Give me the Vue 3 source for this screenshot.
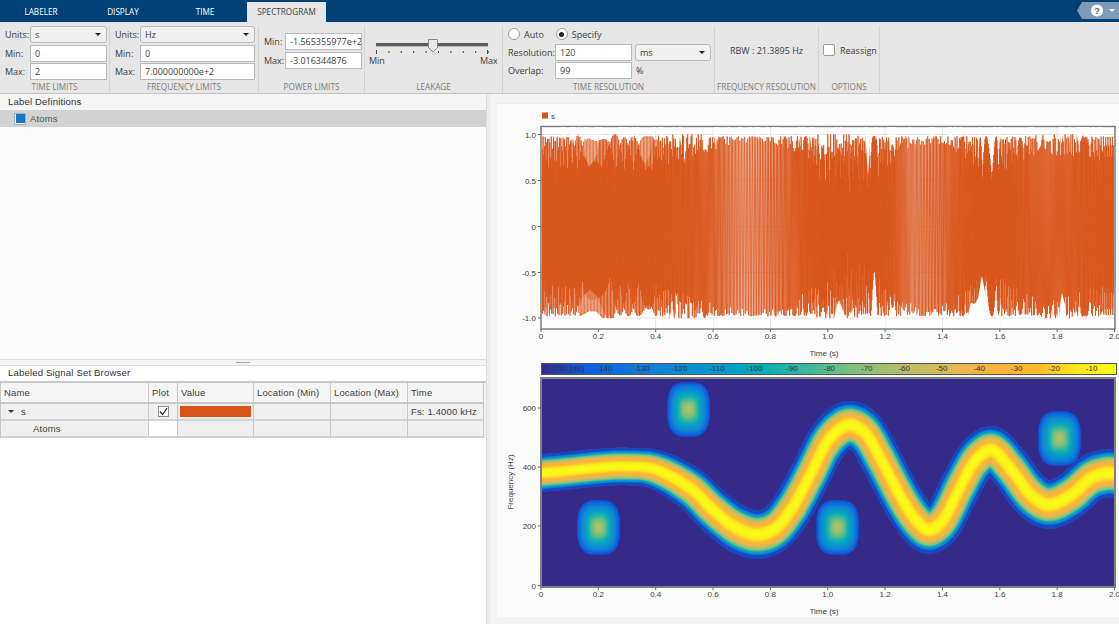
<script setup>
import { ref, onMounted } from 'vue'

const waveCanvas = ref(null)
const heatCanvas = ref(null)

const xTicks = [0, 0.2, 0.4, 0.6, 0.8, 1.0, 1.2, 1.4, 1.6, 1.8, 2.0].map((v, i) => ({
  x: 541 + 57.35 * i,
  label: v === 0 ? '0' : v.toFixed(1),
}))
const waveY = [
  { y: 134.5, label: '1.0' }, { y: 180.5, label: '0.5' }, { y: 226.5, label: '0' },
  { y: 272.5, label: '-0.5' }, { y: 318, label: '-1.0' },
]
const heatY = [
  { y: 408, label: '600' }, { y: 467, label: '400' }, { y: 526, label: '200' }, { y: 585.5, label: '0' },
]
const barLabels = ['-150 (dB)', '-140', '-130', '-120', '-110', '-100', '-90', '-80', '-70', '-60', '-50', '-40', '-30', '-20', '-10']
  .map((label, i) => ({ label, x: i === 0 ? 567 : 566 + 37.47 * i }))
const sliderTicks = Array.from({ length: 10 }, (_, i) => 375 + i * 12.4)

const columns = ['Name', 'Plot', 'Value', 'Location (Min)', 'Location (Max)', 'Time']

const ridge = [
  [541, 472.5], [560, 471], [600, 467], [627, 466], [655, 469], [690, 488], [713, 510], [735, 527],
  [756, 534], [775, 528], [790, 510], [800, 493], [812, 470], [825, 444], [840, 428], [852, 425], [866, 434], [880, 458], [900, 496], [915, 519],
  [928, 529], [943, 519], [960, 486], [975, 460], [992, 450], [1010, 468], [1030, 494], [1048, 504],
  [1070, 495], [1090, 478], [1105, 473], [1116, 473],
]

function ridgeY(x) {
  let i = 0
  while (i < ridge.length - 2 && ridge[i + 1][0] < x) i++
  const p1 = ridge[i], p2 = ridge[i + 1]
  const p0 = ridge[Math.max(0, i - 1)], p3 = ridge[Math.min(ridge.length - 1, i + 2)]
  const h = p2[0] - p1[0]
  const t = Math.max(0, Math.min(1, (x - p1[0]) / h))
  const m1 = ((p2[1] - p0[1]) / (p2[0] - p0[0] || 1)) * h
  const m2 = ((p3[1] - p1[1]) / (p3[0] - p1[0] || 1)) * h
  const t2 = t * t, t3 = t2 * t
  return (2 * t3 - 3 * t2 + 1) * p1[1] + (t3 - 2 * t2 + t) * m1 + (-2 * t3 + 3 * t2) * p2[1] + (t3 - t2) * m2
}

const stops = [
  [0, 249, 251, 21], [10, 250, 232, 32], [20, 253, 190, 44], [30, 253, 176, 58], [40, 232, 184, 78],
  [50, 200, 188, 96], [60, 165, 191, 110], [70, 120, 192, 127], [80, 63, 184, 155], [90, 16, 174, 177],
  [100, 3, 160, 198], [110, 10, 146, 207], [120, 19, 130, 212], [130, 12, 111, 219], [140, 10, 91, 224],
  [150, 53, 42, 135],
]
function colorAt(db) {
  const v = Math.max(0, Math.min(150, -db))
  const i = Math.min(stops.length - 2, Math.floor(v / 10))
  const f = (v - stops[i][0]) / 10
  return [1, 2, 3].map((k) => stops[i][k] + (stops[i + 1][k] - stops[i][k]) * f)
}
const barGradient =
  'linear-gradient(to right,' +
  stops.slice().reverse().map((s) => `rgb(${s[1]},${s[2]},${s[3]}) ${((150 - s[0]) / 150) * 100}%`).join(',') +
  ')'

function drawHeat(canvas) {
  const ctx = canvas.getContext('2d')
  const W = canvas.width, H = canvas.height
  const ox = 542, oy = 379
  const best = new Float64Array(W * H).fill(-1000)
  const a = 20
  for (let sx = 510; sx < 1150; sx += 1) {
    const cy = ridgeY(Math.max(541, Math.min(1116, sx)))
    const b = sx < 640 ? 19 : sx > 740 ? 24.5 : 19 + ((sx - 640) / 100) * 5.5
    for (let x = Math.max(0, Math.floor(sx - a - ox)); x < W && x + ox <= sx + a; x++) {
      const dx = (x + ox - sx) / a
      for (let y = Math.max(0, Math.floor(cy - b - oy)); y < H && y + oy <= cy + b; y++) {
        const dy = (y + oy - cy) / b
        const r2 = dx * dx + dy * dy
        if (r2 > 1) continue
        const v = 150 * Math.pow(r2, 0.85)
        const db = -Math.min(144, v + Math.max(0, v - 70) * 0.6)
        const k = y * W + x
        if (db > best[k]) best[k] = db
      }
    }
  }
  const blobs = [[598, 527], [688, 409], [837, 527], [1059, 438]]
  for (const [bx, by] of blobs) {
    for (let y = 0; y < H; y++) {
      for (let x = 0; x < W; x++) {
        const u = Math.abs(x + ox - bx) / 21.5, v = Math.abs(y + oy - by) / 27.5
        if (u > 1 || v > 1) continue
        const r = Math.pow(u * u * u + v * v * v, 1 / 3)
        if (r > 1) continue
        const db = -Math.min(144, 54 + 92 * Math.pow(r, 1.3))
        const k = y * W + x
        if (db > best[k]) best[k] = db
      }
    }
  }
  const img = ctx.createImageData(W, H)
  for (let k = 0; k < W * H; k++) {
    const c = best[k] < -150 ? [53, 42, 135] : colorAt(best[k])
    img.data[k * 4] = c[0]
    img.data[k * 4 + 1] = c[1]
    img.data[k * 4 + 2] = c[2]
    img.data[k * 4 + 3] = 255
  }
  ctx.putImageData(img, 0, 0)
}

function drawWave(canvas) {
  const ctx = canvas.getContext('2d')
  ctx.translate(-542, -127)
  const atoms = [[0.2, 200], [0.5, 600], [1.03, 200], [1.8, 500]]
  let phase = 0
  let px = 541, py = 226
  ctx.lineWidth = 1
  ctx.strokeStyle = 'rgba(217,83,25,0.85)'
  for (let n = 0; n < 2800; n++) {
    const t = n / 1400
    const x = 541 + t * 286.75
    const f = (586 - ridgeY(x)) / 0.2966
    phase += (2 * Math.PI * f) / 1400
    let s = 0.86 * Math.cos(phase)
    for (const [at, af] of atoms) {
      const g = Math.exp(-Math.pow((t - at) / 0.05, 2))
      s += 0.14 * g * Math.cos(2 * Math.PI * af * t)
    }
    s *= 1.14
    s = Math.max(-1, Math.min(1, s))
    const y = 226.3 - s * 91.8
    ctx.beginPath()
    ctx.moveTo(px, py)
    ctx.lineTo(x, y)
    ctx.stroke()
    px = x
    py = y
  }
  const poly = (pts, color) => {
    ctx.fillStyle = color
    ctx.beginPath()
    pts.forEach((p, i) => (i ? ctx.lineTo(p[0], p[1]) : ctx.moveTo(p[0], p[1])))
    ctx.closePath()
    ctx.fill()
  }
  // irregular spikes along the envelope
  let seed = 12345
  const rnd = () => {
    seed = (seed * 16807) % 2147483647
    return seed / 2147483647
  }
  for (let i = 0; i < 150; i++) {
    const x = 542 + rnd() * 572
    const w = 0.8 + rnd() * 1.6
    const d = 3 + rnd() * rnd() * 10
    if (rnd() < 0.5) poly([[x - w, 127], [x + w, 127], [x + w * 0.6, 135], [x, 135 + d]], '#fff')
    else poly([[x - w, 328], [x + w, 328], [x + w * 0.6, 318], [x, 318 - d]], '#fff')
  }
  poly([[865, 128], [871, 128], [869, 160], [868, 176], [867, 160]], '#fff')
  poly([[966, 327], [969, 310], [971, 303], [975, 304], [978, 298], [982, 276], [985, 292], [988, 312], [990, 327]], '#fff')
  poly([[1058, 327], [1060, 305], [1062, 293], [1065, 305], [1067, 327]], '#fff')
  poly([[832, 327], [837, 305], [839, 300], [843, 311], [850, 327]], '#fff')
  poly([[570, 327], [580, 316], [590, 311], [600, 316], [608, 327]], '#fff')
  poly([[640, 327], [645, 318], [652, 327]], '#fff')
  poly([[580, 135], [590, 133], [600, 135], [597, 155], [590, 166], [583, 155]], 'rgba(255,255,255,0.22)')
  poly([[638, 135], [645, 133], [653, 135], [650, 155], [645, 164], [640, 155]], 'rgba(255,255,255,0.22)')
  poly([[575, 316], [590, 311], [605, 316], [597, 296], [590, 290], [583, 296]], 'rgba(255,255,255,0.22)')
  const band = (x0, x1, alpha) => {
    const g = ctx.createLinearGradient(x0, 0, x1, 0)
    g.addColorStop(0, 'rgba(255,255,255,0)')
    g.addColorStop(0.5, `rgba(255,255,255,${alpha})`)
    g.addColorStop(1, 'rgba(255,255,255,0)')
    ctx.fillStyle = g
    ctx.fillRect(x0, 134, x1 - x0, 184)
  }
  band(715, 770, 0.13)
  band(895, 930, 0.14)
}

onMounted(() => {
  drawWave(waveCanvas.value)
  drawHeat(heatCanvas.value)
})
</script>

<template>
  <div class="app">
    <header class="tabs">
      <div class="tab">LABELER</div>
      <div class="tab">DISPLAY</div>
      <div class="tab">TIME</div>
      <div class="tab active">SPECTROGRAM</div>
      <div class="help">
        <svg width="42" height="17" viewBox="0 0 42 17">
          <path d="M5 0H42V17H5L0 8.5Z" fill="#7f9ab5" />
          <circle cx="20" cy="8.5" r="6" fill="#fff" />
          <text x="20" y="12" text-anchor="middle" class="help-q">?</text>
          <path d="M32 7h6l-3 3z" fill="#fff" />
        </svg>
      </div>
    </header>

    <section class="strip">
      <div class="group g-time">
        <div class="group-body">
          <div class="field"><label>Units:</label><div class="drop"><span>s</span><i></i></div></div>
          <div class="field"><label>Min:</label><div class="input">0</div></div>
          <div class="field"><label>Max:</label><div class="input">2</div></div>
        </div>
        <div class="group-title">TIME LIMITS</div>
      </div>
      <div class="group g-freq">
        <div class="group-body">
          <div class="field"><label>Units:</label><div class="drop"><span>Hz</span><i></i></div></div>
          <div class="field"><label>Min:</label><div class="input">0</div></div>
          <div class="field"><label>Max:</label><div class="input">7.000000000e+2</div></div>
        </div>
        <div class="group-title">FREQUENCY LIMITS</div>
      </div>
      <div class="group g-power">
        <div class="group-body center">
          <div class="field"><label>Min:</label><div class="input clip">-1.565355977e+2</div></div>
          <div class="field"><label>Max:</label><div class="input">-3.016344876</div></div>
        </div>
        <div class="group-title">POWER LIMITS</div>
      </div>
      <div class="group g-leak">
        <div class="group-body">
          <div class="slider">
            <svg width="132" height="42" viewBox="364 28 132 42">
              <rect x="375" y="43" width="112" height="3.5" fill="#5c5c5c" />
              <rect x="375" y="46" width="112" height="1" fill="#bdbdbd" />
              <rect v-for="t in sliderTicks" :key="t" :x="t" y="51" width="1" height="2" fill="#444" />
              <rect x="486" y="50" width="1" height="4" fill="#444" />
              <rect x="375" y="50" width="1" height="4" fill="#444" />
              <path d="M427.500 39.500h9v8l-4.500 4.500-4.500-4.500z" fill="#e8e8e8" stroke="#8a8a8a" />
              <text x="368" y="64" class="tiny">Min</text>
              <text x="479" y="64" class="tiny">Max</text>
            </svg>
          </div>
        </div>
        <div class="group-title">LEAKAGE</div>
      </div>
      <div class="group g-res">
        <div class="group-body">
          <div class="radios">
            <span class="radio"></span><span class="radio-text r1">Auto</span>
            <span class="radio on"></span><span class="radio-text">Specify</span>
          </div>
          <div class="field"><label>Resolution:</label><div class="input">120</div><div class="drop"><span>ms</span><i></i></div></div>
          <div class="field"><label>Overlap:</label><div class="input">99</div><span class="pct">%</span></div>
        </div>
        <div class="group-title">TIME RESOLUTION</div>
      </div>
      <div class="group g-rbw">
        <div class="group-body middle">RBW :  21.3895 Hz</div>
        <div class="group-title">FREQUENCY RESOLUTION</div>
      </div>
      <div class="group g-opt">
        <div class="group-body middle start"><span class="check"></span><span>Reassign</span></div>
        <div class="group-title">OPTIONS</div>
      </div>
    </section>

    <main class="work">
      <aside class="side">
        <div class="defs">
          <div class="panel-title">Label Definitions</div>
          <div class="def-row"><span class="swatch"><b></b></span><span>Atoms</span></div>
        </div>
        <div class="split"><span></span></div>
        <div class="browser">
          <div class="panel-title second">Labeled Signal Set Browser</div>
          <div class="table">
            <div class="row head"><div v-for="c in columns" :key="c" class="cell">{{ c }}</div></div>
            <div class="row body">
              <div class="cell"><span class="tree"></span>s</div>
              <div class="cell plotcell">
                <svg width="11" height="11" viewBox="0 0 11 11">
                  <rect x=".5" y=".5" width="10" height="10" fill="#fff" stroke="#8e8e8e" />
                  <path d="M2 5.500l2.500 3L9 2" fill="none" stroke="#222" stroke-width="1.300" />
                </svg>
              </div>
              <div class="cell valcell"><span class="bar"></span></div>
              <div class="cell"></div>
              <div class="cell"></div>
              <div class="cell">Fs: 1.4000 kHz</div>
            </div>
            <div class="row body">
              <div class="cell indent">Atoms</div>
              <div class="cell blank"></div>
              <div class="cell"></div>
              <div class="cell"></div>
              <div class="cell"></div>
              <div class="cell"></div>
            </div>
          </div>
        </div>
      </aside>
      <div class="vsplit"></div>
      <div class="right">
        <div class="plots">
          <svg class="axes" width="622" height="514" viewBox="497 103 622 514">
            <rect x="541" y="126" width="574" height="203" fill="#fff" />
            <rect x="542" y="112.500" width="6" height="6" fill="#d95319" />
            <text x="551" y="119" class="tick">s</text>
            <line v-for="t in xTicks" :key="'g' + t.x" :x1="t.x" :x2="t.x" y1="127" y2="328" stroke="#e4e4e4" />
            <line v-for="t in waveY" :key="'h' + t.y" x1="541" x2="1115" :y1="t.y" :y2="t.y" stroke="#e2e2e2" />
            <rect x="541" y="126.500" width="574" height="202.500" fill="none" stroke="#777" stroke-width="1.400" />
            <g v-for="t in xTicks" :key="'x' + t.x">
              <line :x1="t.x" :x2="t.x" y1="329" y2="332" stroke="#666" />
              <text :x="t.x" y="339" text-anchor="middle" class="tick">{{ t.label }}</text>
            </g>
            <g v-for="t in waveY" :key="'y' + t.y">
              <line x1="538" x2="541" :y1="t.y" :y2="t.y" stroke="#666" />
              <text x="536" :y="t.y + 3" text-anchor="end" class="tick">{{ t.label }}</text>
            </g>
            <text x="824" y="356" text-anchor="middle" class="tick">Time (s)</text>

            <rect x="541" y="378" width="574" height="209" fill="none" stroke="#808080" stroke-width="2" />
            <g v-for="t in xTicks" :key="'bx' + t.x">
              <line :x1="t.x" :x2="t.x" y1="587" y2="590" stroke="#666" />
              <text :x="t.x" y="597" text-anchor="middle" class="tick">{{ t.label }}</text>
            </g>
            <g v-for="t in heatY" :key="'by' + t.y">
              <line x1="538" x2="541" :y1="t.y" :y2="t.y" stroke="#666" />
              <text x="536" :y="t.y + 3" text-anchor="end" class="tick">{{ t.label }}</text>
            </g>
            <text x="824" y="614" text-anchor="middle" class="tick">Time (s)</text>
            <text transform="translate(513 482) rotate(-90)" text-anchor="middle" class="tick">Frequency (Hz)</text>
          </svg>
          <canvas ref="waveCanvas" class="wave" width="572" height="201"></canvas>
          <canvas ref="heatCanvas" class="heat" width="572" height="207"></canvas>
          <div class="colorbar" :style="{ background: barGradient }">
            <span v-for="b in barLabels" :key="b.label" :style="{ left: b.x - 541 + 'px' }">{{ b.label }}</span>
          </div>
        </div>
      </div>
    </main>
  </div>
</template>

<style scoped>
.app {
  width: 1119px;
  height: 624px;
  overflow: hidden;
  display: flex;
  flex-direction: column;
  background: #f5f5f5;
  font-family: "Liberation Sans", Arial, sans-serif;
  color: #404040;
  filter: blur(0.35px);
}
.tabs {
  height: 22px;
  flex: none;
  background: #004175;
  display: flex;
  align-items: flex-end;
  font-family: "Open Sans", sans-serif;
  font-size: 8.2px;
  color: #fff;
  position: relative;
}
.tab {
  width: 82px;
  height: 20px;
  line-height: 20px;
  text-align: center;
}
.tab.active {
  width: 79px;
  margin-left: 1px;
  background: #e6e6e6;
  color: #404040;
}
.help {
  position: absolute;
  right: 0;
  top: 2px;
  height: 17px;
}
.help-q {
  font: bold 9px "Liberation Sans", sans-serif;
  fill: #44607f;
}
.strip {
  height: 71px;
  flex: none;
  background: #e6e6e6;
  border-bottom: 1px solid #c4c4c4;
  box-sizing: content-box;
  display: flex;
  font-family: "Open Sans", sans-serif;
  font-size: 9px;
}
.group {
  display: flex;
  flex-direction: column;
  border-right: 1px solid #d2d2d2;
  box-sizing: border-box;
  margin-top: 4px;
  height: 67px;
}
.g-time { width: 110px; }
.g-freq { width: 149px; }
.g-power { width: 106px; }
.g-leak { width: 138px; }
.g-res { width: 212px; }
.g-rbw { width: 104px; }
.g-opt { width: 61px; }
.group-body {
  flex: 1;
  padding: 0 2px 0 5px;
  display: flex;
  flex-direction: column;
  gap: 1.500px;
  min-height: 0;
}
.group-body.center { justify-content: center; padding-bottom: 4px; }
.group-body.middle {
  flex-direction: row;
  justify-content: center;
  align-items: center;
  padding: 0 0 6px;
  white-space: pre;
}
.group-body.start { justify-content: flex-start; padding-left: 4px; gap: 5px; }
.group-title {
  height: 13px;
  line-height: 13px;
  text-align: center;
  color: #808080;
  font-size: 8.2px;
  white-space: nowrap;
}
.field {
  display: flex;
  align-items: center;
  height: 17px;
}
.field label { flex: none; white-space: nowrap; }
.g-time label, .g-freq label { width: 25px; }
.g-power label { width: 21px; }
.g-res label { width: 47px; }
.input, .drop {
  box-sizing: border-box;
  height: 17px;
  line-height: 15px;
  border: 1px solid #b9b9b9;
  background: #fff;
  padding-left: 4px;
  white-space: nowrap;
  overflow: hidden;
  flex: none;
}
.g-time .input, .g-time .drop { width: 77px; }
.g-freq .input, .g-freq .drop { width: 115px; }
.g-power .input { width: 77px; }
.g-res .input { width: 77px; }
.g-res .drop { width: 76px; margin-left: 3px; }
.drop {
  background: #f0f0f0;
  border-radius: 3px;
  display: flex;
  justify-content: space-between;
  align-items: center;
  padding-right: 5px;
}
.drop i {
  width: 0;
  height: 0;
  border-left: 3.500px solid transparent;
  border-right: 3.500px solid transparent;
  border-top: 3.500px solid #222;
}
.pct { margin-left: 4px; }
.slider { margin: 0 0 0 -5px; height: 42px; }
.slider svg { display: block; margin-top: 2px; }
.tiny { font: 9px "Open Sans", sans-serif; fill: #404040; }
.radios {
  display: flex;
  align-items: center;
  height: 14px;
  margin: 1px 0 1px;
}
.radio {
  box-sizing: border-box;
  width: 12px;
  height: 12px;
  border-radius: 50%;
  background: #fff;
  border: 1px solid #9a9a9a;
  margin-right: 4px;
  display: flex;
  align-items: center;
  justify-content: center;
}
.radio.on::after {
  content: "";
  width: 5px;
  height: 5px;
  border-radius: 50%;
  background: #222;
}
.r1 { margin-right: 12px; }
.check {
  box-sizing: border-box;
  width: 12px;
  height: 12px;
  background: #fff;
  border: 1px solid #9a9a9a;
  border-radius: 2px;
}
.work {
  flex: 1;
  min-height: 0;
  display: flex;
}
.side {
  width: 486px;
  flex: none;
  display: flex;
  flex-direction: column;
  background: #fff;
  font-size: 9.5px;
  letter-spacing: 0.15px;
}
.defs {
  height: 265px;
  flex: none;
  background: #fafafa;
}
.panel-title {
  height: 16px;
  line-height: 15px;
  padding-left: 8px;
  background: #f5f5f5;
  font-size: 9.6px;
  color: #333;
}
.panel-title.second { background: #fff; height: 15px; line-height: 14px; }
.def-row {
  height: 17px;
  background: #d2d2d2;
  display: flex;
  align-items: center;
  padding-left: 14px;
  gap: 4px;
  color: #555;
}
.swatch {
  box-sizing: border-box;
  width: 12px;
  height: 12px;
  border: 1px solid #9fb4c8;
  background: #e6eef5;
  display: flex;
  align-items: center;
  justify-content: center;
}
.swatch b { width: 9px; height: 9px; background: #1f74c0; }
.split {
  height: 5px;
  background: #f4f4f4;
  border-top: 1px solid #dcdcdc;
  border-bottom: 1px solid #dcdcdc;
  display: flex;
  align-items: center;
  justify-content: center;
}
.split span { width: 14px; height: 1px; background: #aaa; }
.browser { flex: 1; min-height: 0; }
.table { border-top: 2px solid #c8c8c8; border-left: 1px solid #c8c8c8; }
.row {
  display: grid;
  grid-template-columns: 148px 29px 76px 77px 77px 76px;
}
.row.head { height: 21px; background: #f5f5f5; }
.row.body { height: 17px; background: #efefef; }
.cell {
  box-sizing: border-box;
  border-right: 1px solid #c8c8c8;
  border-bottom: 2px solid #d2d2d2;
  padding-left: 3px;
  display: flex;
  align-items: center;
  white-space: nowrap;
  overflow: hidden;
}
.head .cell { border-bottom-color: #c8c8c8; }
.tree {
  width: 0;
  height: 0;
  border-left: 3px solid transparent;
  border-right: 3px solid transparent;
  border-top: 3.500px solid #333;
  margin: 0 7px 0 4px;
}
.plotcell { justify-content: center; padding: 0; background: #efefef; }
.valcell { padding: 0 2px 0 2px; }
.bar { width: 100%; height: 11px; background: #d95319; }
.indent { padding-left: 32px; }
.blank { background: #fff; }
.vsplit {
  width: 3px;
  flex: none;
  background: #ececec;
  border-left: 1px solid #dcdcdc;
}
.right {
  flex: 1;
  min-width: 0;
  padding: 9px 0 0 7px;
  background: #f3f3f3;
}
.plots {
  position: relative;
  width: 622px;
  height: 514px;
  background: #fbfbfb;
  border-top: 1px solid #ececec;
  box-sizing: border-box;
}
.axes { position: absolute; left: 0; top: -1px; display: block; }
.tick { font: 8px "Liberation Sans", sans-serif; fill: #404040; }
.wave, .heat { position: absolute; display: block; }
.wave { left: 45px; top: 23px; }
.heat { left: 45px; top: 275px; }
.colorbar {
  position: absolute;
  left: 44px;
  top: 259px;
  width: 576px;
  height: 12px;
  box-sizing: border-box;
  border: 1px solid #555;
}
.colorbar span {
  position: absolute;
  top: 0;
  line-height: 10px;
  font-size: 8px;
  color: #333;
  transform: translateX(-50%);
  white-space: nowrap;
}
</style>
